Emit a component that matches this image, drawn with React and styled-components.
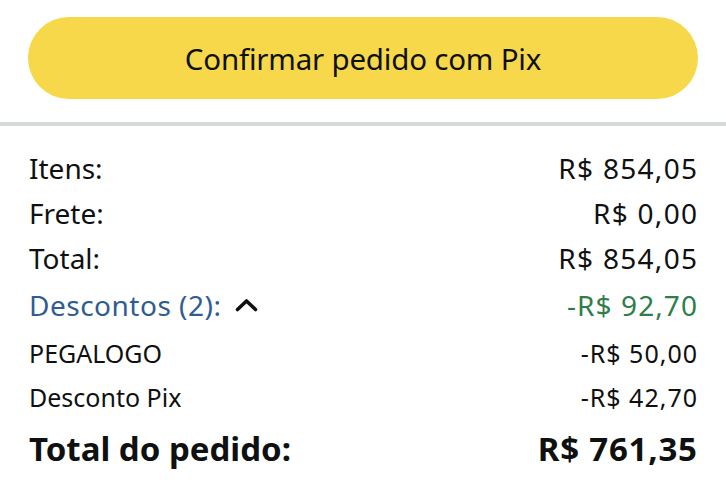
import React from 'react';
import styled, { createGlobalStyle } from 'styled-components';

const GlobalStyle = createGlobalStyle`
  body {
    margin: 0;
    background: #fff;
    font-family: "Noto Sans", "Open Sans", Arial, sans-serif;
    color: #0f1111;
  }
`;

const Page = styled.div`
  width: 726px;
  height: 500px;
  overflow: hidden;
  background: #fff;
`;

const ButtonWrap = styled.div`
  padding: 17px 28px 23px;
  border-bottom: 4px solid #d5d9d9;
`;

const PrimaryButton = styled.button`
  display: flex;
  align-items: center;
  justify-content: center;
  width: 100%;
  height: 82px;
  border: none;
  border-radius: 41px;
  background: #f7d84b;
  color: #0f1111;
  font-family: inherit;
  font-size: 29.5px;
  letter-spacing: -0.2px;
  cursor: pointer;
`;

const Summary = styled.div`
  padding: 19px 29px 0;
`;

const Row = styled.div`
  display: flex;
  align-items: center;
  justify-content: space-between;
  height: ${({ h }) => h}px;
  font-size: ${({ size }) => size}px;
  font-weight: ${({ bold }) => (bold ? 700 : 400)};
`;

const Label = styled.span`
  display: flex;
  align-items: center;
  gap: 14px;
  letter-spacing: ${({ tone }) => (tone === 'link' ? '0.5px' : '0')};
  color: ${({ tone }) => (tone === 'link' ? '#2f5d92' : '#0f1111')};
`;

const Amount = styled.span`
  letter-spacing: ${({ spacing }) => spacing}px;
  margin-right: ${({ spacing }) => -spacing}px;
  color: ${({ tone }) => (tone === 'green' ? '#2f7d48' : '#0f1111')};
`;

const Caret = () => (
  <svg width="23" height="14" viewBox="0 0 23 14" aria-hidden="true">
    <path d="M2.5 11.5 L11.5 3 L20.5 11.5" fill="none" stroke="#0f1111" strokeWidth="3.6" strokeLinecap="round" strokeLinejoin="round" />
  </svg>
);

const rows = [
  { label: 'Itens:', amount: 'R$ 854,05', h: 45, size: 28, spacing: 1.3 },
  { label: 'Frete:', amount: 'R$ 0,00', h: 45, size: 28, spacing: 1.3 },
  { label: 'Total:', amount: 'R$ 854,05', h: 45, size: 28, spacing: 1.3 },
  { label: 'Descontos (2):', amount: '-R$ 92,70', h: 50, size: 28, spacing: 1.1, tone: 'link', caret: true, amountTone: 'green' },
  { label: 'PEGALOGO', amount: '-R$ 50,00', h: 46, size: 25, spacing: 1 },
  { label: 'Desconto Pix', amount: '-R$ 42,70', h: 41, size: 25, spacing: 1 },
  { label: 'Total do pedido:', amount: 'R$ 761,35', h: 62, size: 33, spacing: 0.8, bold: true },
];

export default function App() {
  return (
    <Page>
      <GlobalStyle />
      <ButtonWrap>
        <PrimaryButton>Confirmar pedido com Pix</PrimaryButton>
      </ButtonWrap>
      <Summary>
        {rows.map((r) => (
          <Row key={r.label} h={r.h} size={r.size} bold={r.bold}>
            <Label tone={r.tone}>
              {r.label}
              {r.caret && <Caret />}
            </Label>
            <Amount tone={r.amountTone} spacing={r.spacing}>{r.amount}</Amount>
          </Row>
        ))}
      </Summary>
    </Page>
  );
}
